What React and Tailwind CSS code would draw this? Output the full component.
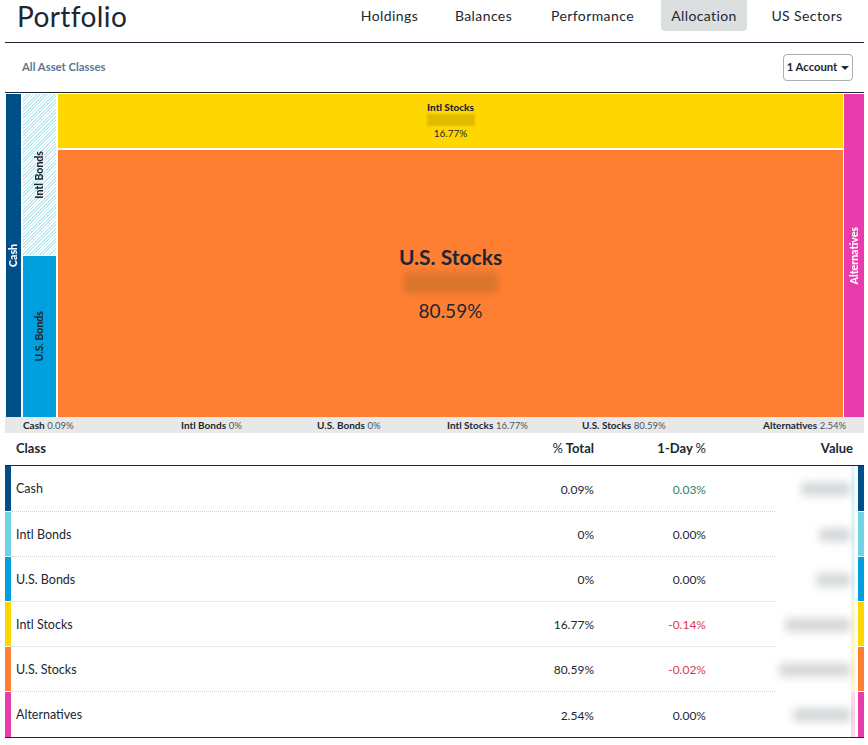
const tabs = [
  { label: 'Holdings', width: 'w-[79px]' },
  { label: 'Balances', width: 'w-[81px]' },
  { label: 'Performance', width: 'w-[109px]' },
  { label: 'Allocation', width: 'w-[86px]' },
  { label: 'US Sectors', width: 'w-[92px]' },
];

const legend = [
  ['Cash', '0.09%'],
  ['Intl Bonds', '0%'],
  ['U.S. Bonds', '0%'],
  ['Intl Stocks', '16.77%'],
  ['U.S. Stocks', '80.59%'],
  ['Alternatives', '2.54%'],
];

const rows = [
  { name: 'Cash', total: '0.09%', day: '0.03%', dayColor: 'text-[#2f7d6b]', bar: 'bg-[#004f8b]', tint: 'bg-[#6fd3e3]', blob: 'w-[50px]', height: 'h-[46px]' },
  { name: 'Intl Bonds', total: '0%', day: '0.00%', dayColor: 'text-[#1f2a37]', bar: 'bg-[#6fd3e3]', tint: 'bg-[#6fd3e3]', blob: 'w-[32px]', height: 'h-[45px]' },
  { name: 'U.S. Bonds', total: '0%', day: '0.00%', dayColor: 'text-[#1f2a37]', bar: 'bg-[#009fde]', tint: 'bg-[#6fd3e3]', blob: 'w-[35px]', height: 'h-[45px]' },
  { name: 'Intl Stocks', total: '16.77%', day: '-0.14%', dayColor: 'text-[#e0364f]', bar: 'bg-[#ffd700]', tint: 'bg-[#ffd700]', blob: 'w-[66px]', height: 'h-[45px]' },
  { name: 'U.S. Stocks', total: '80.59%', day: '-0.02%', dayColor: 'text-[#e0364f]', bar: 'bg-[#ff7f32]', tint: 'bg-[#ffd700]', blob: 'w-[72px]', height: 'h-[45px]' },
  { name: 'Alternatives', total: '2.54%', day: '0.00%', dayColor: 'text-[#1f2a37]', bar: 'bg-[#e93cac]', tint: 'bg-[#e93cac]', blob: 'w-[58px]', height: 'h-[45px]' },
];

function VerticalLabel({ children, className }) {
  return (
    <span className={`[writing-mode:vertical-rl] rotate-180 text-[10.5px] font-black leading-none ${className}`}>
      {children}
    </span>
  );
}

export default function App() {
  return (
    <div className="min-h-[745px] bg-white pl-[5px] pr-[4px] font-['Lato',sans-serif] text-[#1b2733]">
      <header className="flex h-[43px] items-start justify-between border-b border-[#1b2733]">
        <h1 className="pl-3 text-[28px] font-normal leading-[33px] tracking-[0.4px]">Portfolio</h1>
        <nav className="flex gap-[14px] pr-[11px]">
          {tabs.map((tab) => (
            <a
              key={tab.label}
              className={`flex h-[31px] items-center justify-center rounded-b pb-px text-[14px] tracking-[0.4px] ${tab.width} ${
                tab.label === 'Allocation' ? 'bg-[#dcdfe0]' : ''
              }`}
            >
              {tab.label}
            </a>
          ))}
        </nav>
      </header>

      <div className="flex h-[50px] items-center justify-between border-b border-[#1b2733] pl-[17px] pr-[11px]">
        <span className="text-[11.3px] font-bold text-[#5b7694]">All Asset Classes</span>
        <button className="flex h-[27px] w-[70px] items-center justify-center gap-1 rounded border border-[#a9b0b5] bg-white text-[11.3px] font-bold">
          1 Account
          <span className="h-0 w-0 border-x-[4px] border-t-[4px] border-x-transparent border-t-[#1b2733]"></span>
        </button>
      </div>

      <div className="mt-px flex h-[323px] pl-px">
        <div className="flex w-[15px] items-center justify-center bg-[#004f8b]">
          <VerticalLabel className="text-white">Cash</VerticalLabel>
        </div>
        <div className="ml-[2px] flex w-[33px] flex-col gap-px">
          <div className="flex flex-1 items-center justify-center bg-[repeating-linear-gradient(135deg,#bfeaf2_0,#bfeaf2_1.2px,#ffffff_1.2px,#ffffff_2.4px)]">
            <VerticalLabel>Intl Bonds</VerticalLabel>
          </div>
          <div className="flex flex-1 items-center justify-center bg-[#009fde]">
            <VerticalLabel>U.S. Bonds</VerticalLabel>
          </div>
        </div>
        <div className="ml-[2px] flex w-[785px] flex-col gap-[2px]">
          <div className="flex h-[54px] flex-col items-center bg-[#ffd700] pt-[7px]">
            <span className="text-[10px] font-black leading-[12px]">Intl Stocks</span>
            <span className="my-px h-[12px] w-[48px] bg-[#dfbc00] blur-[1px]"></span>
            <span className="text-[10px] leading-[12px]">16.77%</span>
          </div>
          <div className="flex flex-1 flex-col items-center justify-center bg-[#ff7f32]">
            <span className="text-[21px] font-bold leading-[28px]">U.S. Stocks</span>
            <span className="mb-[4px] mt-px h-[22px] w-[96px] rounded-md bg-[#dc762c] blur-[3px]"></span>
            <span className="text-[19px] leading-[26px]">80.59%</span>
          </div>
        </div>
        <div className="ml-px flex w-[20px] items-center justify-center bg-[#e93cac]">
          <VerticalLabel className="text-white">Alternatives</VerticalLabel>
        </div>
      </div>

      <div className="grid h-4 grid-cols-[158px_136px_130px_135px_181px_1fr] items-center bg-[#e8e8e8] pl-[18px] text-[10px] leading-none">
        {legend.map(([name, pct]) => (
          <span key={name} className="whitespace-nowrap">
            <b className="font-bold">{name}</b> <span className="text-[9.5px] text-[#4a5560]">{pct}</span>
          </span>
        ))}
      </div>

      <div className="flex h-[33px] items-center border-b border-[#1b2733] pl-[11px] pr-[11px] text-[13px] font-bold">
        <span className="flex-1">Class</span>
        <span className="w-[100px] text-right"><span className="font-normal">%</span> Total</span>
        <span className="w-[112px] text-right">1-Day <span className="font-normal">%</span></span>
        <span className="w-[147px] text-right">Value</span>
      </div>

      <div className="border-b border-[#1b2733]">
        {rows.map((row, i) => (
          <div key={row.name} className={`flex ${row.height}`}>
            <div className={`w-[6px] ${row.bar} ${i < 5 ? 'mb-px' : ''}`}></div>
            <div className={`flex flex-1 items-center pl-[5px] pt-[2px] text-[12.5px] ${i < 5 ? 'border-b border-dotted border-[#d0d3d5]' : ''}`}>
              <span className="flex-1">{row.name}</span>
              <span className="w-[100px] text-right text-[12px]">{row.total}</span>
              <span className={`w-[112px] text-right text-[12px] ${row.dayColor}`}>{row.day}</span>
              <span className="w-[69px]"></span>
            </div>
            <div className="flex w-[83px] items-center justify-end bg-white pr-[3px]">
              <span className={`h-[14px] rounded-sm bg-[#d5d8da] blur-[4px] ${row.blob}`}></span>
              <span className={`h-full w-[4px] opacity-20 ${row.tint}`}></span>
            </div>
            <div className={`w-[6px] ${row.bar} ${i < 5 ? 'mb-px' : ''}`}></div>
          </div>
        ))}
      </div>
    </div>
  );
}
